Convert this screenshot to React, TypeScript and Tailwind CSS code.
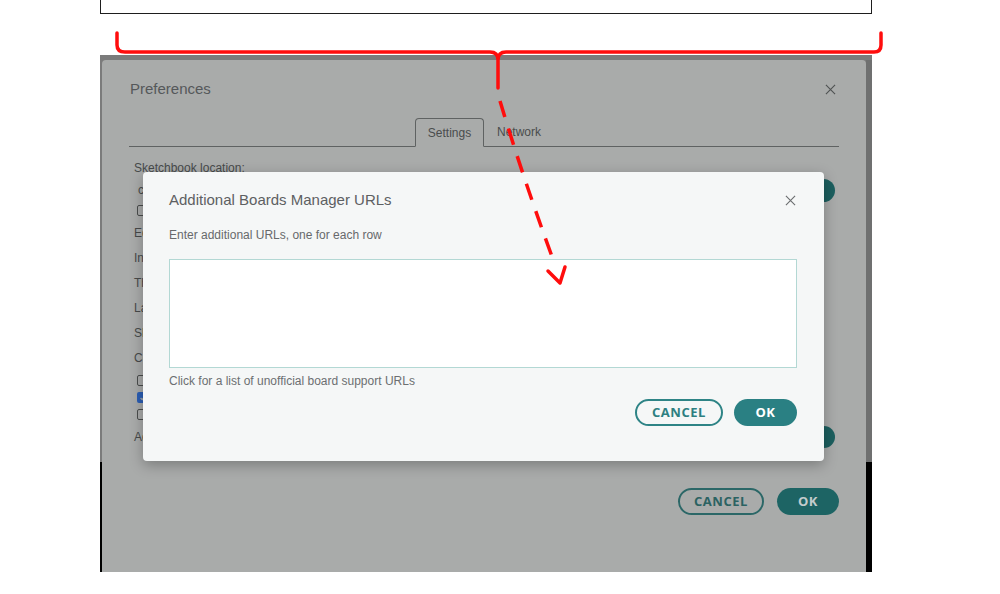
import React from 'react';

const sans = "font-['Liberation_Sans',Arial,sans-serif]";
const btnFont = "font-['Open_Sans','Liberation_Sans',sans-serif]";

function CloseIcon({ className }: { className?: string }) {
  return (
    <svg viewBox="0 0 12 12" className={className} fill="none" stroke="currentColor" strokeWidth={1.2}>
      <path d="M1 1l10 10M11 1L1 11" />
    </svg>
  );
}

function Checkbox({ checked }: { checked?: boolean }) {
  if (checked) {
    return (
      <span className="flex h-[11px] w-[11px] items-center justify-center rounded-[2px] bg-[#2b5eb4]">
        <svg viewBox="0 0 10 10" className="h-[8px] w-[8px]" fill="none" stroke="#a9abaa" strokeWidth={1.6}>
          <path d="M2 5l2 2 4-4.5" />
        </svg>
      </span>
    );
  }
  return <span className="h-[11px] w-[11px] rounded-[2px] border border-[#4b4d4d]" />;
}

function Annotations() {
  return (
    <svg
      className="pointer-events-none absolute left-0 top-0 h-[594px] w-[1000px]"
      viewBox="0 0 1000 594"
      fill="none"
      stroke="#ff0d0d"
      strokeWidth={3.5}
      strokeLinecap="round"
      strokeLinejoin="round"
    >
      <path d="M117 33 L117 45 Q117 52 125 52 L490 52 Q498 52 498 60 L498 88 M498 60 Q498 52 506 52 L874 52 Q881 52 881 45 L881 33" />
      <path d="M500 101 Q522 175 554 262" strokeDasharray="17 12" strokeLinecap="butt" />
      <path d="M548 271 L560 283 L565 267" />
    </svg>
  );
}

function PreferencesDialog() {
  return (
    <div className={`flex w-[764px] shrink-0 flex-col overflow-hidden rounded-t-[4px] bg-[#a9abaa] px-[27px] ${sans}`}>
      <div className="flex h-[58px] shrink-0 items-center justify-between pl-[1px]">
        <span className="text-[15px] text-[#55585a]">Preferences</span>
        <CloseIcon className="mr-[3px] h-[11px] w-[11px] text-[#4f5252]" />
      </div>
      <div className="flex h-[29px] shrink-0 items-end border-b border-[#5f6262] text-[12px] text-[#4a4d4d]">
        <div className="-mb-px ml-[286px] flex h-[29px] w-[69px] items-center justify-center rounded-t-[4px] border border-[#5f6262] border-b-[#a9abaa]">
          Settings
        </div>
        <div className="ml-[13px] flex h-[28px] items-center">Network</div>
      </div>
      <div className="flex shrink-0 flex-col pl-[5px] pr-[4px] text-[12px] text-[#474a4a]">
        <div className="mt-[13px] h-[16px] leading-[16px]">Sketchbook location:</div>
        <div className="mt-[2px] flex h-[24px] items-center gap-3">
          <div className="flex-1 pl-[4px]">c:\Users\user\Documents\Arduino</div>
          <div className={`flex h-[23px] items-center rounded-full bg-[#1c5f5f] px-4 text-[12px] font-bold text-[#bcc6c6] ${btnFont}`}>
            BROWSE
          </div>
        </div>
        <div className="flex h-[16px] items-center gap-[6px] pl-[3px]">
          <Checkbox />
          <span>Show files inside Sketches</span>
        </div>
        <div className="mt-[2px] flex h-[25px] items-center">Editor font size:</div>
        <div className="flex h-[25px] items-center">Interface scale:</div>
        <div className="flex h-[25px] items-center">Theme:</div>
        <div className="flex h-[25px] items-center">Language:</div>
        <div className="flex h-[25px] items-center">Show verbose output during</div>
        <div className="flex h-[25px] items-center">Compiler warnings</div>
        <div className="mt-[2px] flex h-[17px] items-center gap-[6px] pl-[3px]">
          <Checkbox />
          <span>Verify code after upload</span>
        </div>
        <div className="flex h-[17px] items-center gap-[6px] pl-[3px]">
          <Checkbox checked />
          <span>Auto save</span>
        </div>
        <div className="flex h-[17px] items-center gap-[6px] pl-[3px]">
          <Checkbox />
          <span>Editor Quick Suggestions</span>
        </div>
        <div className="mt-[2px] flex h-[24px] items-center gap-3">
          <span className="flex-1">Additional boards manager URLs:</span>
          <div className="h-[22px] w-[40px] rounded-full bg-[#1c5f5f]" />
        </div>
      </div>
      <div className={`mt-[39px] flex shrink-0 justify-end gap-[13px] text-[13px] font-bold tracking-[0.04em] ${btnFont}`}>
        <div className="flex h-[27px] w-[86px] items-center justify-center rounded-full border-2 border-[#2b6767] text-[#2b6262]">
          CANCEL
        </div>
        <div className="flex h-[27px] w-[62px] items-center justify-center rounded-full bg-[#1d6464] text-[#c3cccc]">
          OK
        </div>
      </div>
    </div>
  );
}

function UrlsDialog() {
  return (
    <div
      className={`absolute left-[43px] top-[117px] flex h-[289px] w-[681px] flex-col rounded-[4px] bg-[#f5f7f7] pl-[26px] pr-[27px] shadow-[0_4px_14px_rgba(0,0,0,0.28)] ${sans}`}
    >
      <div className="flex h-[56px] items-center justify-between">
        <span className="text-[15px] text-[#5d6062]">Additional Boards Manager URLs</span>
        <CloseIcon className="mr-[1px] h-[11px] w-[11px] text-[#6a6d6f]" />
      </div>
      <div className="h-[14px] text-[12px] leading-[14px] text-[#67696b]">Enter additional URLs, one for each row</div>
      <textarea
        readOnly
        className="mt-[17px] h-[109px] w-full resize-none border border-[#b3d8d4] bg-white outline-none"
      />
      <div className="mt-[6px] h-[14px] text-[12px] leading-[14px] text-[#6c6f71]">
        Click for a list of unofficial board support URLs
      </div>
      <div className={`mt-[11px] flex justify-end gap-[11px] text-[13px] font-bold tracking-[0.04em] ${btnFont}`}>
        <div className="flex h-[27px] w-[88px] items-center justify-center rounded-full border-2 border-[#2e8486] text-[#2d7f81]">
          CANCEL
        </div>
        <div className="flex h-[27px] w-[63px] items-center justify-center rounded-full bg-[#2a8083] text-white">
          OK
        </div>
      </div>
    </div>
  );
}

export default function App() {
  return (
    <div className="relative h-[594px] w-[1000px] overflow-hidden bg-white">
      <div className="ml-[100px] h-[14px] w-[772px] border-x-[1.5px] border-b-[1.5px] border-[#1e1e1e]" />
      <div className="relative ml-[100px] mt-[41px] flex h-[517px] w-[772px] overflow-hidden bg-[#7b7b7b] pt-[5px]">
        <div className="flex w-[2px] shrink-0 flex-col">
          <div className="h-[402px]" />
          <div className="flex-1 bg-black" />
        </div>
        <PreferencesDialog />
        <div className="flex w-[6px] shrink-0 flex-col">
          <div className="h-[402px] bg-[#6f7070]" />
          <div className="flex-1 bg-black" />
        </div>
        <UrlsDialog />
      </div>
      <Annotations />
    </div>
  );
}
